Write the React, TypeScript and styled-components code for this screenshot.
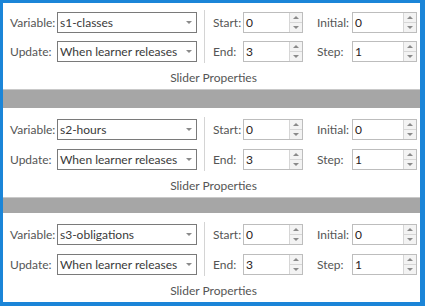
import React from "react";
import styled, { createGlobalStyle } from "styled-components";

interface SliderConfig {
	variable: string;
	update: string;
	start: number;
	end: number;
	initial: number;
	step: number;
}

const sliders: SliderConfig[] = [
	{ variable: "s1-classes", update: "When learner releases", start: 0, end: 3, initial: 0, step: 1 },
	{ variable: "s2-hours", update: "When learner releases", start: 0, end: 3, initial: 0, step: 1 },
	{ variable: "s3-obligations", update: "When learner releases", start: 0, end: 3, initial: 0, step: 1 },
];

const Spinner = ({ value }: { value: number }) => (
	<SpinBox>
		<SpinValue>{value}</SpinValue>
		<SpinButtons>
			<SpinButton>
				<Arrow $dir="up" />
			</SpinButton>
			<SpinButton>
				<Arrow $dir="down" />
			</SpinButton>
		</SpinButtons>
	</SpinBox>
);

const Combo = ({ value }: { value: string }) => (
	<ComboBox>
		<ComboText>{value}</ComboText>
		<Arrow $dir="down" />
	</ComboBox>
);

const SliderPanel = ({ data, first }: { data: SliderConfig; first: boolean }) => (
	<Panel $first={first}>
		<Controls>
			<LeftGroup $first={first}>
				<Label>Variable:</Label>
				<Combo value={data.variable} />
				<Label>Update:</Label>
				<Combo value={data.update} />
			</LeftGroup>
			<Divider />
			<RightGroup $first={first}>
				<Label>Start:</Label>
				<Spinner value={data.start} />
				<Label $indent>Initial:</Label>
				<Spinner value={data.initial} />
				<Label>End:</Label>
				<Spinner value={data.end} />
				<Label $indent>Step:</Label>
				<Spinner value={data.step} />
			</RightGroup>
		</Controls>
		<Caption>Slider Properties</Caption>
	</Panel>
);

const App = () => {
	return (
		<>
			<GlobalStyle />
			<Frame>
				{sliders.map((s, i) => (
					<React.Fragment key={s.variable}>
						{i > 0 && <Band $h={i === 1 ? 19 : 16} />}
						<SliderPanel data={s} first={i === 0} />
					</React.Fragment>
				))}
			</Frame>
		</>
	);
};

const GlobalStyle = createGlobalStyle`
	html, body {
		margin: 0;
		padding: 0;
		background: #ffffff;
	}
	body {
		font-family: Lato, "Noto Sans", sans-serif;
	}
`;

const Frame = styled.div`
	width: 425px;
	height: 306px;
	box-sizing: border-box;
	border-style: solid;
	border-color: #1b85d8;
	border-width: 3px 5px 4px 3px;
	background: #ffffff;
	display: flex;
	flex-direction: column;
	overflow: hidden;
`;

const Band = styled.div<{ $h: number }>`
	height: ${(p) => p.$h}px;
	flex: none;
	background: #a6a6a6;
	border-top: 1px solid #c9c9c9;
	box-sizing: border-box;
`;

const Panel = styled.div<{ $first: boolean }>`
	flex: none;
	display: flex;
	flex-direction: column;
	padding: ${(p) => (p.$first ? 9 : 11)}px 3px 3px 7px;
`;

const Controls = styled.div`
	display: flex;
	align-items: stretch;
`;

const LeftGroup = styled.div<{ $first: boolean }>`
	display: grid;
	grid-template-columns: 47px 140px;
	grid-auto-rows: 21px;
	row-gap: ${(p) => (p.$first ? 8 : 9)}px;
`;

const RightGroup = styled.div<{ $first: boolean }>`
	display: grid;
	grid-template-columns: 30px 60px 49px 65px;
	grid-auto-rows: 21px;
	row-gap: ${(p) => (p.$first ? 8 : 9)}px;
`;

const Divider = styled.div`
	width: 1px;
	background: #d4d4d4;
	margin: -2px 8px -1px 7px;
`;

const Label = styled.span<{ $indent?: boolean }>`
	display: flex;
	align-items: center;
	padding-left: ${(p) => (p.$indent ? 14 : 0)}px;
	font-size: 12px;
	color: #555555;
	white-space: nowrap;
`;

const ComboBox = styled.div`
	display: flex;
	align-items: center;
	justify-content: space-between;
	box-sizing: border-box;
	border: 1px solid #7a7a7a;
	padding: 0 4px 0 2px;
	background: #ffffff;
`;

const ComboText = styled.span`
	font-size: 12px;
	color: #3a3a3a;
	white-space: nowrap;
`;

const Arrow = styled.span<{ $dir: "up" | "down" }>`
	width: 0;
	height: 0;
	border-left: 3px solid transparent;
	border-right: 3px solid transparent;
	${(p) =>
		p.$dir === "up"
			? "border-bottom: 3px solid #8a8a8a;"
			: "border-top: 3px solid #8a8a8a;"}
`;

const SpinBox = styled.div`
	display: flex;
	box-sizing: border-box;
	border: 1px solid #bdbdbd;
	background: #ffffff;
`;

const SpinValue = styled.span`
	flex: 1;
	display: flex;
	align-items: center;
	padding-left: 2px;
	font-size: 12px;
	color: #2a1c1c;
`;

const SpinButtons = styled.div`
	width: 12px;
	display: flex;
	flex-direction: column;
	border-left: 1px solid #d6d6d6;
`;

const SpinButton = styled.div`
	flex: 1;
	display: flex;
	align-items: center;
	justify-content: center;
	background: #f3f3f3;
	& + & {
		border-top: 1px solid #d6d6d6;
	}
`;

const Caption = styled.div`
	margin-top: 8px;
	height: 16px;
	line-height: 16px;
	text-align: center;
	font-size: 12px;
	color: #555555;
`;

export default App;
